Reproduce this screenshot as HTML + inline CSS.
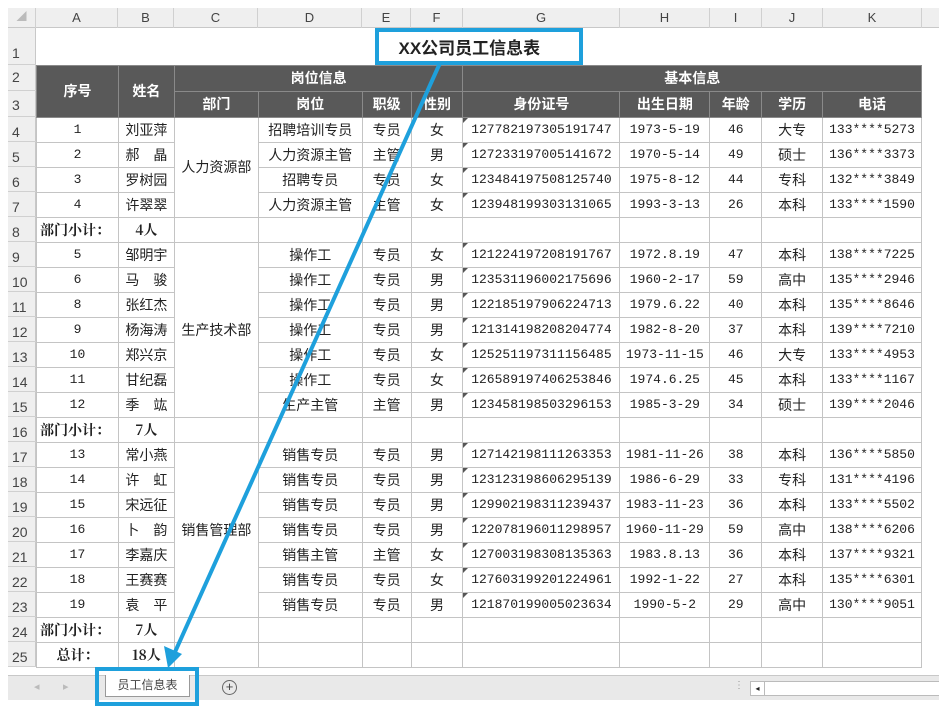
<!DOCTYPE html>
<html><head><meta charset="utf-8">
<style>
*{margin:0;padding:0;box-sizing:border-box}
body{width:939px;height:708px;background:#fff;position:relative;overflow:hidden;font-family:"Liberation Sans","Noto Sans CJK SC",sans-serif;color:#222}
#colhdr{position:absolute;left:8px;top:8px;height:20px;width:931px;background:#efefef;border-bottom:1px solid #c8c8c8}
#colhdr div{position:absolute;top:0;height:20px;line-height:20px;text-align:center;font-size:13px;color:#444;border-right:1px solid #d0d0d0}
#rowhdr{position:absolute;left:8px;top:28px;width:28px;height:639px;background:#efefef;border-right:1px solid #c8c8c8}
#rowhdr div{position:absolute;left:0;width:28px;font-size:14px;color:#444;padding-left:4px;border-bottom:1px solid #d0d0d0}
table{position:absolute;left:36px;top:28px;border-collapse:collapse;table-layout:fixed}
td{border:1px solid #c4c4c4;height:25px;text-align:center;font-size:14px;white-space:nowrap;overflow:hidden;padding:0}
td.n{font-family:"Liberation Mono","Noto Sans CJK SC",monospace;font-size:13px}
tr.h td{background:#595959;color:#fff;font-weight:bold;border-color:#8a8a8a}
td.b{font-weight:bold;text-align:left;padding-left:3px;font-family:"Noto Serif CJK SC",serif}
td.bb{font-weight:bold;font-family:"Noto Serif CJK SC",serif}
td.g{position:relative}
td.g::before{content:"";position:absolute;left:0;top:0;border-top:5px solid #555;border-right:5px solid transparent}
#tabbar{position:absolute;left:8px;top:675px;width:931px;height:25px;background:#e9e9e9;border-top:1px solid #c8c8c8}
</style></head><body>
<div id="colhdr">
<div style="left:0;width:28px;color:#bbb;font-size:10px">◢</div>
<div style="left:28px;width:82px">A</div><div style="left:110px;width:56px">B</div><div style="left:166px;width:84px">C</div><div style="left:250px;width:104px">D</div><div style="left:354px;width:49px">E</div><div style="left:403px;width:52px">F</div><div style="left:455px;width:157px">G</div><div style="left:612px;width:90px">H</div><div style="left:702px;width:52px">I</div><div style="left:754px;width:61px">J</div><div style="left:815px;width:99px">K</div>
</div>
<div id="rowhdr">
<div style="top:0;height:37px;padding-top:17px">1</div>
<div style="top:37px;height:26px;padding-top:4px">2</div>
<div style="top:63px;height:26px;padding-top:6px">3</div>
</div>
<table>
<colgroup><col style="width:82px"><col style="width:56px"><col style="width:84px"><col style="width:104px"><col style="width:49px"><col style="width:52px"><col style="width:157px"><col style="width:90px"><col style="width:52px"><col style="width:61px"><col style="width:99px"><col style="width:17px"></colgroup>
<tr><td colspan="11" style="height:37px;border:none;text-align:left;padding-left:362px;font-size:17px;font-weight:bold">XX公司员工信息表</td><td style="border:none"></td></tr>
<tr class="h"><td rowspan="2" style="font-size:14px">序号</td><td rowspan="2">姓名</td><td colspan="4" style="height:26px">岗位信息</td><td colspan="5">基本信息</td><td style="background:#fff;border:none"></td></tr>
<tr class="h"><td style="height:26px">部门</td><td>岗位</td><td>职级</td><td>性别</td><td>身份证号</td><td>出生日期</td><td>年龄</td><td>学历</td><td>电话</td><td style="background:#fff;border:none"></td></tr>
<tr><td class="n">1</td><td>刘亚萍</td><td rowspan="4">人力资源部</td><td>招聘培训专员</td><td>专员</td><td>女</td><td class="n g">127782197305191747</td><td class="n">1973-5-19</td><td class="n">46</td><td>大专</td><td class="n">133****5273</td><td style="border:none"></td></tr>
<tr><td class="n">2</td><td>郝　晶</td><td>人力资源主管</td><td>主管</td><td>男</td><td class="n g">127233197005141672</td><td class="n">1970-5-14</td><td class="n">49</td><td>硕士</td><td class="n">136****3373</td><td style="border:none"></td></tr>
<tr><td class="n">3</td><td>罗树园</td><td>招聘专员</td><td>专员</td><td>女</td><td class="n g">123484197508125740</td><td class="n">1975-8-12</td><td class="n">44</td><td>专科</td><td class="n">132****3849</td><td style="border:none"></td></tr>
<tr><td class="n">4</td><td>许翠翠</td><td>人力资源主管</td><td>主管</td><td>女</td><td class="n g">123948199303131065</td><td class="n">1993-3-13</td><td class="n">26</td><td>本科</td><td class="n">133****1590</td><td style="border:none"></td></tr>
<tr><td class="b">部门小计：</td><td class="bb">4人</td><td></td><td></td><td></td><td></td><td></td><td></td><td></td><td></td><td></td><td style="border:none"></td></tr>
<tr><td class="n">5</td><td>邹明宇</td><td rowspan="7">生产技术部</td><td>操作工</td><td>专员</td><td>女</td><td class="n g">121224197208191767</td><td class="n">1972.8.19</td><td class="n">47</td><td>本科</td><td class="n">138****7225</td><td style="border:none"></td></tr>
<tr><td class="n">6</td><td>马　骏</td><td>操作工</td><td>专员</td><td>男</td><td class="n g">123531196002175696</td><td class="n">1960-2-17</td><td class="n">59</td><td>高中</td><td class="n">135****2946</td><td style="border:none"></td></tr>
<tr><td class="n">8</td><td>张红杰</td><td>操作工</td><td>专员</td><td>男</td><td class="n g">122185197906224713</td><td class="n">1979.6.22</td><td class="n">40</td><td>本科</td><td class="n">135****8646</td><td style="border:none"></td></tr>
<tr><td class="n">9</td><td>杨海涛</td><td>操作工</td><td>专员</td><td>男</td><td class="n g">121314198208204774</td><td class="n">1982-8-20</td><td class="n">37</td><td>本科</td><td class="n">139****7210</td><td style="border:none"></td></tr>
<tr><td class="n">10</td><td>郑兴京</td><td>操作工</td><td>专员</td><td>女</td><td class="n g">125251197311156485</td><td class="n">1973-11-15</td><td class="n">46</td><td>大专</td><td class="n">133****4953</td><td style="border:none"></td></tr>
<tr><td class="n">11</td><td>甘纪磊</td><td>操作工</td><td>专员</td><td>女</td><td class="n g">126589197406253846</td><td class="n">1974.6.25</td><td class="n">45</td><td>本科</td><td class="n">133****1167</td><td style="border:none"></td></tr>
<tr><td class="n">12</td><td>季　竑</td><td>生产主管</td><td>主管</td><td>男</td><td class="n g">123458198503296153</td><td class="n">1985-3-29</td><td class="n">34</td><td>硕士</td><td class="n">139****2046</td><td style="border:none"></td></tr>
<tr><td class="b">部门小计：</td><td class="bb">7人</td><td></td><td></td><td></td><td></td><td></td><td></td><td></td><td></td><td></td><td style="border:none"></td></tr>
<tr><td class="n">13</td><td>常小燕</td><td rowspan="7">销售管理部</td><td>销售专员</td><td>专员</td><td>男</td><td class="n g">127142198111263353</td><td class="n">1981-11-26</td><td class="n">38</td><td>本科</td><td class="n">136****5850</td><td style="border:none"></td></tr>
<tr><td class="n">14</td><td>许　虹</td><td>销售专员</td><td>专员</td><td>男</td><td class="n g">123123198606295139</td><td class="n">1986-6-29</td><td class="n">33</td><td>专科</td><td class="n">131****4196</td><td style="border:none"></td></tr>
<tr><td class="n">15</td><td>宋远征</td><td>销售专员</td><td>专员</td><td>男</td><td class="n g">129902198311239437</td><td class="n">1983-11-23</td><td class="n">36</td><td>本科</td><td class="n">133****5502</td><td style="border:none"></td></tr>
<tr><td class="n">16</td><td>卜　韵</td><td>销售专员</td><td>专员</td><td>男</td><td class="n g">122078196011298957</td><td class="n">1960-11-29</td><td class="n">59</td><td>高中</td><td class="n">138****6206</td><td style="border:none"></td></tr>
<tr><td class="n">17</td><td>李嘉庆</td><td>销售主管</td><td>主管</td><td>女</td><td class="n g">127003198308135363</td><td class="n">1983.8.13</td><td class="n">36</td><td>本科</td><td class="n">137****9321</td><td style="border:none"></td></tr>
<tr><td class="n">18</td><td>王赛赛</td><td>销售专员</td><td>专员</td><td>女</td><td class="n g">127603199201224961</td><td class="n">1992-1-22</td><td class="n">27</td><td>本科</td><td class="n">135****6301</td><td style="border:none"></td></tr>
<tr><td class="n">19</td><td>袁　平</td><td>销售专员</td><td>专员</td><td>男</td><td class="n g">121870199005023634</td><td class="n">1990-5-2</td><td class="n">29</td><td>高中</td><td class="n">130****9051</td><td style="border:none"></td></tr>
<tr><td class="b">部门小计：</td><td class="bb">7人</td><td></td><td></td><td></td><td></td><td></td><td></td><td></td><td></td><td></td><td style="border:none"></td></tr>
<tr><td class="bb">总计：</td><td class="bb">18人</td><td></td><td></td><td></td><td></td><td></td><td></td><td></td><td></td><td></td><td style="border:none"></td></tr>
</table>
<div id="rows2"></div>
<div style="position:absolute;left:8px;top:117px;width:28px;font-size:14px;color:#444">
<div style="height:25px;padding:7px 0 0 4px;border-bottom:1px solid #d0d0d0">4</div><div style="height:25px;padding:7px 0 0 4px;border-bottom:1px solid #d0d0d0">5</div><div style="height:25px;padding:7px 0 0 4px;border-bottom:1px solid #d0d0d0">6</div><div style="height:25px;padding:7px 0 0 4px;border-bottom:1px solid #d0d0d0">7</div><div style="height:25px;padding:7px 0 0 4px;border-bottom:1px solid #d0d0d0">8</div><div style="height:25px;padding:7px 0 0 4px;border-bottom:1px solid #d0d0d0">9</div><div style="height:25px;padding:7px 0 0 4px;border-bottom:1px solid #d0d0d0">10</div><div style="height:25px;padding:7px 0 0 4px;border-bottom:1px solid #d0d0d0">11</div><div style="height:25px;padding:7px 0 0 4px;border-bottom:1px solid #d0d0d0">12</div><div style="height:25px;padding:7px 0 0 4px;border-bottom:1px solid #d0d0d0">13</div><div style="height:25px;padding:7px 0 0 4px;border-bottom:1px solid #d0d0d0">14</div><div style="height:25px;padding:7px 0 0 4px;border-bottom:1px solid #d0d0d0">15</div><div style="height:25px;padding:7px 0 0 4px;border-bottom:1px solid #d0d0d0">16</div><div style="height:25px;padding:7px 0 0 4px;border-bottom:1px solid #d0d0d0">17</div><div style="height:25px;padding:7px 0 0 4px;border-bottom:1px solid #d0d0d0">18</div><div style="height:25px;padding:7px 0 0 4px;border-bottom:1px solid #d0d0d0">19</div><div style="height:25px;padding:7px 0 0 4px;border-bottom:1px solid #d0d0d0">20</div><div style="height:25px;padding:7px 0 0 4px;border-bottom:1px solid #d0d0d0">21</div><div style="height:25px;padding:7px 0 0 4px;border-bottom:1px solid #d0d0d0">22</div><div style="height:25px;padding:7px 0 0 4px;border-bottom:1px solid #d0d0d0">23</div><div style="height:25px;padding:7px 0 0 4px;border-bottom:1px solid #d0d0d0">24</div><div style="height:25px;padding:7px 0 0 4px;border-bottom:1px solid #d0d0d0">25</div>
</div>
<div id="tabbar">
<span style="position:absolute;left:26px;top:4px;color:#bbb;font-size:11px">◂</span>
<span style="position:absolute;left:55px;top:4px;color:#bbb;font-size:11px">▸</span>
<div style="position:absolute;left:97px;top:-1px;width:85px;height:22px;background:#fff;border:1px solid #999;border-top:none;text-align:center;font-size:12px;line-height:21px;color:#444">员工信息表</div>
<div style="position:absolute;left:214px;top:4px;width:15px;height:15px;border:1px solid #666;border-radius:50%;text-align:center;line-height:12px;font-size:13px;color:#444">+</div>
<span style="position:absolute;left:726px;top:4px;color:#999;font-size:10px">⋮</span>
<div style="position:absolute;left:742px;top:5px;width:200px;height:15px;background:#fff;border:1px solid #bbb"><div style="width:14px;height:13px;border-right:1px solid #bbb;font-size:8px;text-align:center;line-height:13px">◂</div></div>
</div>
<svg style="position:absolute;left:0;top:0" width="939" height="708">
<rect x="377" y="30" width="204" height="33" fill="none" stroke="#1ea0dc" stroke-width="4"/>
<line x1="440" y1="63" x2="175" y2="652" stroke="#1ea0dc" stroke-width="4"/>
<polygon points="168,668 164,646 182,654" fill="#1ea0dc"/>
<rect x="97" y="669" width="100" height="35" fill="none" stroke="#1ea0dc" stroke-width="4"/>
</svg>
</body></html>
